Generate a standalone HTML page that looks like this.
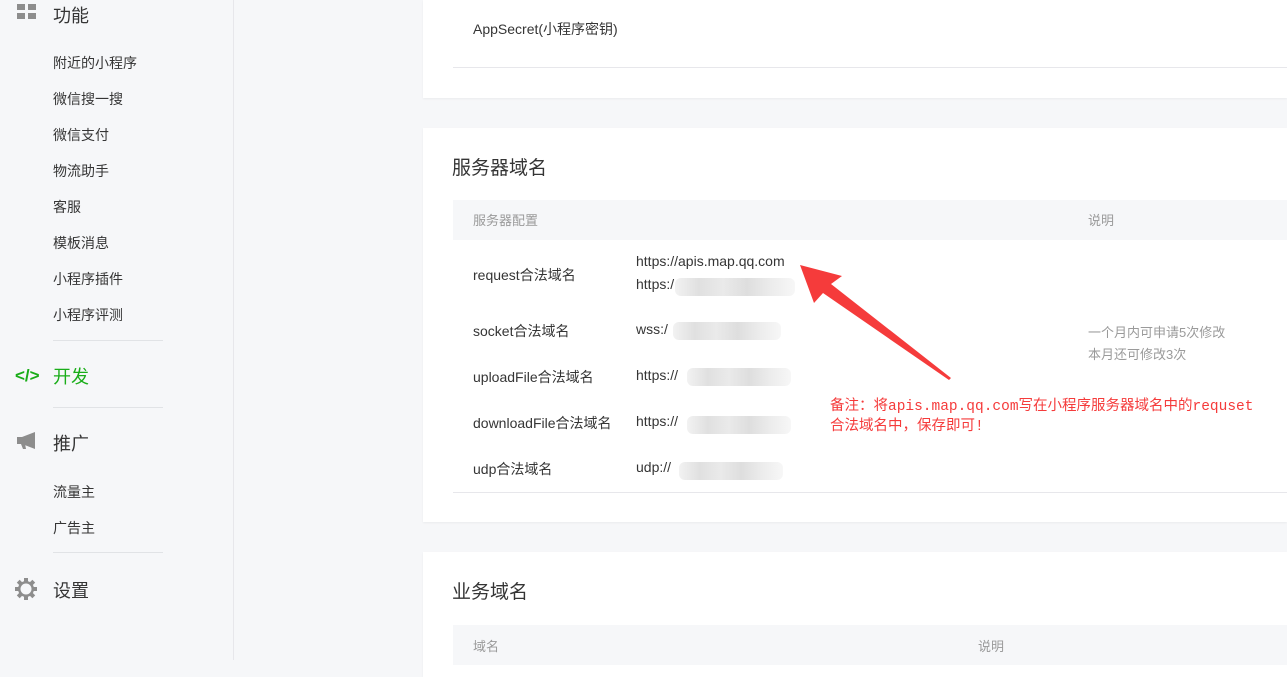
<!DOCTYPE html>
<html><head><meta charset="utf-8"><style>
body{margin:0;width:1287px;height:677px;overflow:hidden;background:#f6f7f9;font-family:"Liberation Sans","Noto Sans CJK SC",sans-serif;position:relative;color:#353535}
.a{position:absolute;white-space:nowrap}
.t,.sub,.hd,.g{margin-top:-1px}
.side{position:absolute;left:0;top:0;width:233px;height:660px;border-right:1px solid #e7e7eb}
.sub{font-size:14px;color:#353535}
.hd{font-size:18px;color:#353535}
.hr{position:absolute;left:53px;width:110px;height:1px;background:#e1e3e6}
.card{position:absolute;left:423px;width:864px;background:#fff;box-shadow:0 1px 2px rgba(0,0,0,.05)}
.blur{position:absolute;height:18px;background:linear-gradient(90deg,#f2f2f2,#e0e0e0,#eaeaea,#dedede,#ececec,#f7f7f7);border-radius:6px}
.t{font-size:14px;color:#353535}
.g{font-size:13px;color:#9a9a9a}
</style></head><body>
<div class="side">
<svg class="a" style="left:17px;top:4px" width="19" height="16"><rect x="0" y="0" width="8" height="6" fill="#8d8d8d"/><rect x="11" y="0" width="8" height="6" fill="#8d8d8d"/><rect x="0" y="9" width="8" height="6" fill="#8d8d8d"/><rect x="11" y="9" width="8" height="6" fill="#8d8d8d"/></svg>
<div class="a hd" style="left:53px;top:3px">功能</div>
<div class="a sub" style="left:53px;top:54px">附近的小程序</div>
<div class="a sub" style="left:53px;top:90px">微信搜一搜</div>
<div class="a sub" style="left:53px;top:126px">微信支付</div>
<div class="a sub" style="left:53px;top:162px">物流助手</div>
<div class="a sub" style="left:53px;top:198px">客服</div>
<div class="a sub" style="left:53px;top:234px">模板消息</div>
<div class="a sub" style="left:53px;top:270px">小程序插件</div>
<div class="a sub" style="left:53px;top:306px">小程序评测</div>
<div class="hr" style="top:340px"></div>
<div class="a" style="left:15px;top:366px;font-size:17px;font-weight:bold;color:#1aad19">&lt;/&gt;</div>
<div class="a hd" style="left:53px;top:364px;color:#1aad19">开发</div>
<div class="hr" style="top:407px"></div>
<svg class="a" style="left:17px;top:432px" width="20" height="18"><path d="M0 5h5l13-5v17L5 12H0z" fill="#8d8d8d"/><path d="M4 12l2 5h3l-1-5z" fill="#8d8d8d"/></svg>
<div class="a hd" style="left:53px;top:431px">推广</div>
<div class="a sub" style="left:53px;top:483px">流量主</div>
<div class="a sub" style="left:53px;top:519px">广告主</div>
<div class="hr" style="top:552px"></div>
<svg class="a" style="left:15px;top:578px" width="22" height="22" viewBox="0 0 22 22"><g fill="#8d8d8d"><circle cx="11" cy="11" r="8"/><rect x="9" y="0" width="4" height="22"/><rect x="0" y="9" width="22" height="4"/><rect x="9" y="0" width="4" height="22" transform="rotate(45 11 11)"/><rect x="9" y="0" width="4" height="22" transform="rotate(-45 11 11)"/></g><circle cx="11" cy="11" r="5.5" fill="#f6f7f9"/></svg>
<div class="a hd" style="left:53px;top:578px">设置</div>
</div>

<div class="card" style="top:0;height:98px">
<div class="a t" style="left:50px;top:20px">AppSecret(小程序密钥)</div>
<div class="a" style="left:30px;top:67px;width:834px;height:1px;background:#e7e7eb"></div>
</div>

<div class="card" style="top:128px;height:394px">
<div class="a" style="left:29px;top:25px;font-size:19px;color:#353535">服务器域名</div>
<div class="a" style="left:30px;top:72px;width:834px;height:40px;background:#f6f7f9"></div>
<div class="a g" style="left:50px;top:83px">服务器配置</div>
<div class="a g" style="left:665px;top:83px">说明</div>
<div class="a t" style="left:50px;top:138px">request合法域名</div>
<div class="a t" style="left:213px;top:126px">https://apis.map.qq.com</div>
<div class="a t" style="left:213px;top:149px">https:/</div>
<div class="blur" style="left:252px;top:150px;width:120px"></div>
<div class="a t" style="left:50px;top:194px">socket合法域名</div>
<div class="a t" style="left:213px;top:194px">wss:/</div>
<div class="blur" style="left:250px;top:194px;width:108px"></div>
<div class="a g" style="left:665px;top:195px">一个月内可申请5次修改</div>
<div class="a g" style="left:665px;top:217px">本月还可修改3次</div>
<div class="a t" style="left:50px;top:240px">uploadFile合法域名</div>
<div class="a t" style="left:213px;top:240px">https://</div>
<div class="blur" style="left:264px;top:240px;width:104px"></div>
<div class="a t" style="left:50px;top:286px">downloadFile合法域名</div>
<div class="a t" style="left:213px;top:286px">https://</div>
<div class="blur" style="left:264px;top:288px;width:104px"></div>
<div class="a t" style="left:50px;top:332px">udp合法域名</div>
<div class="a t" style="left:213px;top:332px">udp://</div>
<div class="blur" style="left:256px;top:334px;width:104px"></div>
<div class="a" style="left:30px;top:364px;width:834px;height:1px;background:#e7e7eb"></div>
</div>

<div class="card" style="top:552px;height:125px">
<div class="a" style="left:29px;top:25px;font-size:19px;color:#353535">业务域名</div>
<div class="a" style="left:30px;top:73px;width:834px;height:40px;background:#f6f7f9"></div>
<div class="a g" style="left:50px;top:85px">域名</div>
<div class="a g" style="left:555px;top:85px">说明</div>
</div>

<svg class="a" style="left:0;top:0" width="1287" height="677"><path d="M800 265 L842 276 L831 284 L951 378 L949 380 L823 293 L814 303 Z" fill="#f53b3b"/></svg>
<div class="a" style="left:830px;top:397px;font-size:14.5px;color:#f53b3b;line-height:20px;font-family:'Liberation Mono','Noto Sans CJK SC',monospace">备注：将apis.map.qq.com写在小程序服务器域名中的requset<br>合法域名中，保存即可!</div>
</body></html>
